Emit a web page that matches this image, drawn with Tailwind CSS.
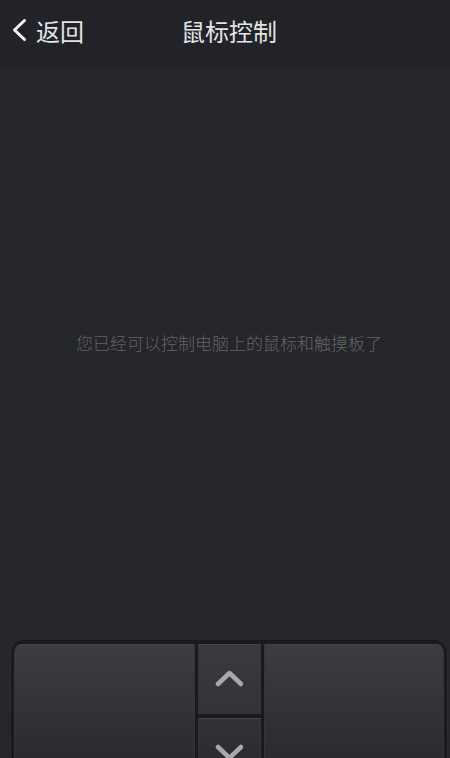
<!DOCTYPE html>
<html lang="zh-CN" class="h-full">
<head>
    <meta charset="UTF-8">
    <meta name="viewport" content="width=device-width, initial-scale=1.0">
    <title>鼠标控制</title>
    <script src="https://cdn.jsdelivr.net/npm/@tailwindcss/browser@4"></script>
</head>
<body class="h-full bg-[#25262a] font-['Noto_Sans_CJK_SC',sans-serif]">
    <div class="h-full flex flex-col overflow-hidden">
        <!-- Header -->
        <header class="grid grid-cols-[1fr_auto_1fr] items-center bg-[#222328] pl-2 pt-1 pb-1.5 h-[67px] shrink-0">
            <a href="#" class="flex items-center gap-2 pl-1 pb-1 text-2xl leading-8 text-[#e4e4e6]">
                <svg class="w-4 h-6" viewBox="0 0 16 24" fill="none" stroke="#f4f4f5" stroke-width="3" stroke-linecap="round" stroke-linejoin="round">
                    <path d="M12.5 1.5 L2.5 11 L12.5 20.5"/>
                </svg>
                返回
            </a>
            <h1 class="pb-1 text-2xl leading-8 text-[#e4e4e6]">鼠标控制</h1>
        </header>

        <!-- Touchpad -->
        <main class="grow flex items-center justify-center pl-2 pb-5.5">
            <p class="text-[17px] leading-6 font-light text-[#636466]">您已经可以控制电脑上的鼠标和触摸板了</p>
        </main>

        <!-- Mouse buttons -->
        <footer class="h-[118px] shrink-0 overflow-hidden pl-[11px] pr-[3px]">
            <div class="grid grid-cols-[1fr_63px_1fr] gap-[3px] h-[148px] px-[3px] pt-1 rounded-t-xl bg-[#191a1e] shadow-[0_0_0_1px_#2b2c31]">
                <button type="button" aria-label="左键" class="rounded-tl-lg border-t border-x border-t-[#444549] border-x-[#343439] bg-linear-to-b from-[#3d3c41] to-[#28262b]"></button>
                <div class="grid grid-rows-2 gap-1">
                    <button type="button" aria-label="向上滚动" class="flex items-center justify-center pb-1 border-t border-x border-t-[#444549] border-x-[#343439] bg-linear-to-b from-[#3b3a3f] to-[#333237]">
                        <svg class="w-7 h-5" viewBox="0 0 28 20" fill="none" stroke="#a9a8ab" stroke-width="4.5" stroke-linecap="round" stroke-linejoin="round">
                            <path d="M3 16 L14.5 5 L26 16"/>
                        </svg>
                    </button>
                    <button type="button" aria-label="向下滚动" class="flex items-center justify-center pb-1 border-t border-x border-t-[#444549] border-x-[#343439] bg-linear-to-b from-[#333237] to-[#28262b]">
                        <svg class="w-7 h-5" viewBox="0 0 28 20" fill="none" stroke="#a9a8ab" stroke-width="4.5" stroke-linecap="round" stroke-linejoin="round">
                            <path d="M3 5 L14.5 16 L26 5"/>
                        </svg>
                    </button>
                </div>
                <button type="button" aria-label="右键" class="rounded-tr-lg border-t border-x border-t-[#444549] border-x-[#343439] bg-linear-to-b from-[#3d3c41] to-[#28262b]"></button>
            </div>
        </footer>
    </div>
</body>
</html>
